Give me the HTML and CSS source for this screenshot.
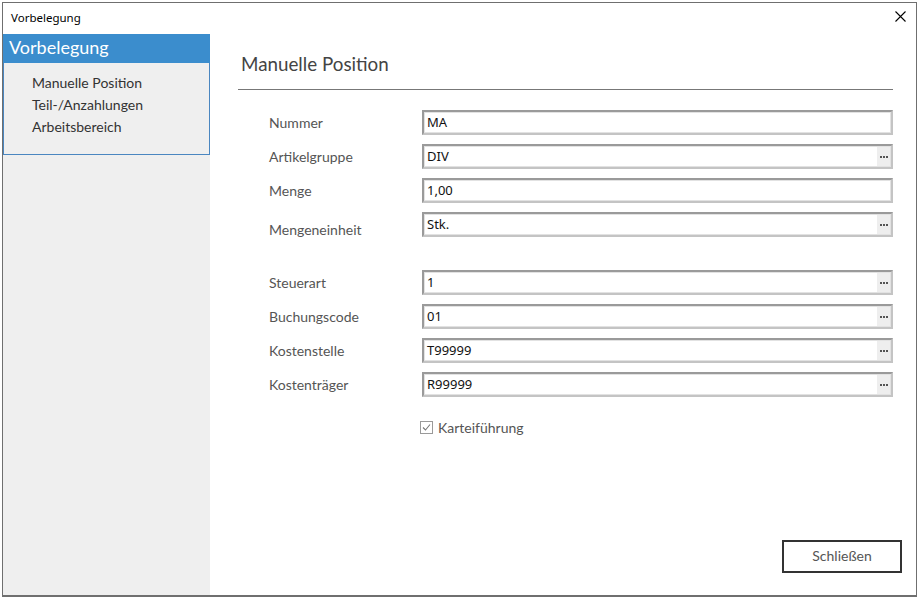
FILE: index.html
```html
<!DOCTYPE html>
<html lang="de">
<head>
<meta charset="utf-8">
<title>Vorbelegung</title>
<link rel="stylesheet" href="styles.css">
</head>
<body>
<div class="window">
  <div class="titlebar">
    <span class="title">Vorbelegung</span>
    <span class="close" aria-label="Schließen">
      <svg width="11" height="11" viewBox="0 0 11 11"><path d="M0.5 0.5 L10.5 10.5 M10.5 0.5 L0.5 10.5" stroke="#000" stroke-width="1.1" fill="none"/></svg>
    </span>
  </div>
  <div class="body">
    <aside class="sidebar">
      <div class="side-head">Vorbelegung</div>
      <ul class="side-list">
        <li>Manuelle Position</li>
        <li>Teil-/Anzahlungen</li>
        <li>Arbeitsbereich</li>
      </ul>
    </aside>
    <main class="main">
      <h1 class="heading">Manuelle Position</h1>
      <div class="form">
        <div class="row"><span class="label">Nummer</span><div class="field"><span class="value">MA</span></div></div>
        <div class="row"><span class="label">Artikelgruppe</span><div class="field"><span class="value">DIV</span><span class="dots"><i></i><i></i><i></i></span></div></div>
        <div class="row"><span class="label">Menge</span><div class="field"><span class="value">1,00</span></div></div>
        <div class="row row-low"><span class="label">Mengeneinheit</span><div class="field"><span class="value">Stk.</span><span class="dots"><i></i><i></i><i></i></span></div></div>
        <div class="row row-gap"><span class="label">Steuerart</span><div class="field"><span class="value">1</span><span class="dots"><i></i><i></i><i></i></span></div></div>
        <div class="row"><span class="label">Buchungscode</span><div class="field"><span class="value">01</span><span class="dots"><i></i><i></i><i></i></span></div></div>
        <div class="row"><span class="label">Kostenstelle</span><div class="field"><span class="value">T99999</span><span class="dots"><i></i><i></i><i></i></span></div></div>
        <div class="row"><span class="label">Kostenträger</span><div class="field"><span class="value">R99999</span><span class="dots"><i></i><i></i><i></i></span></div></div>
        <div class="check-row">
          <span class="checkbox"><svg width="11" height="11" viewBox="0 0 11 11"><path d="M2 5.5 L4.5 8 L9 2.5" stroke="#777" stroke-width="1.1" fill="none"/></svg></span>
          <span class="check-label">Karteiführung</span>
        </div>
      </div>
      <div class="footer">
        <button class="btn">Schließen</button>
      </div>
    </main>
  </div>
</div>
</body>
</html>
```

FILE: styles.css
```css
* { box-sizing: border-box; }
html, body { margin: 0; padding: 0; background: #ffffff; }
body { width: 919px; height: 599px; overflow: hidden; }

.window {
  margin: 2px 0 0 2px;
  width: 915px;
  height: 595px;
  border: 1px solid #6f6f6f;
  border-bottom-width: 2px;
  background: #fff;
  display: flex;
  flex-direction: column;
}

.titlebar {
  height: 31px;
  flex: none;
  display: flex;
  align-items: center;
  justify-content: space-between;
  padding: 0 10px 0 8px;
  font-family: "Noto Sans", sans-serif;
  font-size: 11.5px;
  color: #000;
}
.title { margin-top: -2px; }
.close { display: flex; margin-top: -4px; }

.body { flex: 1; display: flex; min-height: 0; }

.sidebar {
  width: 207px;
  flex: none;
  background: #efefef;
  font-family: "Lato", sans-serif;
}
.side-head {
  height: 29px;
  background: #3b8dcd;
  color: #fff;
  font-size: 18px;
  padding-left: 6px;
  line-height: 26px;
}
.side-list {
  list-style: none;
  margin: 0;
  padding: 9px 0 15px 28px;
  height: 92px;
  border: 1px solid #4a86c0;
  border-top: none;
  color: #333;
  font-size: 14px;
}
.side-list li { height: 22px; line-height: 22px; }

.main {
  flex: 1;
  display: flex;
  flex-direction: column;
  padding: 0 23px 0 28px;
  font-family: "Lato", sans-serif;
}
.heading {
  margin: 17px 0 0 3px;
  font-weight: normal;
  font-size: 18.8px;
  color: #444;
  height: 38px;
  line-height: 26px;
}
.form {
  border-top: 1px solid #777;
  padding: 20px 0 0 31px;
  display: flex;
  flex-direction: column;
  gap: 9px;
}
.row {
  display: flex;
  align-items: center;
  height: 25px;
}
.row-low .label { margin-top: 10px; }
.row-gap { margin-top: 24px; }
.label {
  width: 153px;
  flex: none;
  font-size: 14px;
  color: #555;
}
.field {
  flex: 1;
  height: 25px;
  border: 2px solid #a6a6a6;
  border-color: #9a9a9a #c4c4c4 #c4c4c4 #9a9a9a;
  display: flex;
  align-items: stretch;
  background: #fff;
  outline: 1px solid #e2e2e2;
  outline-offset: -3px;
}
.value {
  flex: 1;
  padding-left: 3px;
  font-family: "Noto Sans", sans-serif;
  font-size: 13px;
  line-height: 20px;
  color: #111;
}
.dots {
  width: 14px;
  background: #eeeeee;
  display: flex;
  align-items: center;
  justify-content: center;
  gap: 1px;
  padding-top: 1px;
}
.dots i {
  display: block;
  width: 2px;
  height: 2px;
  background: #555;
}

.check-row {
  display: flex;
  align-items: center;
  margin: 12px 0 0 151px;
  height: 18px;
}
.checkbox {
  width: 13px;
  height: 13px;
  border: 1px solid #9a9a9a;
  display: flex;
  align-items: center;
  justify-content: center;
  margin-right: 5px;
}
.check-label { font-size: 14px; color: #555; }

.footer {
  margin-top: auto;
  display: flex;
  justify-content: flex-end;
  padding-bottom: 22px;
  margin-right: -9px;
}
.btn {
  width: 120px;
  height: 33px;
  border: 2px solid #333;
  background: #fff;
  font-family: "Lato", sans-serif;
  font-size: 14px;
  color: #555;
  padding: 0 0 3px 0;
}
```
